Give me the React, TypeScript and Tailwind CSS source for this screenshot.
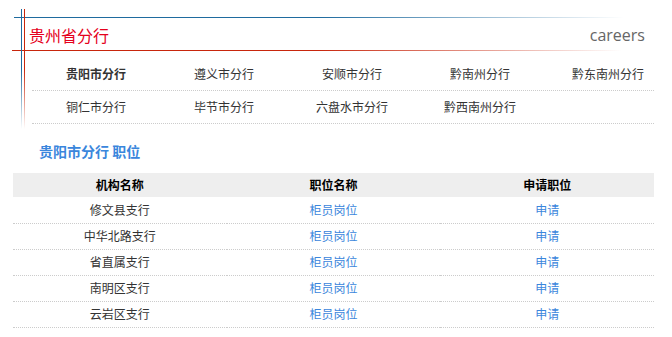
import React from 'react';

const branches = [
  ['贵阳市分行', '遵义市分行', '安顺市分行', '黔南州分行', '黔东南州分行'],
  ['铜仁市分行', '毕节市分行', '六盘水市分行', '黔西南州分行'],
];

const jobs = [
  { org: '修文县支行', title: '柜员岗位' },
  { org: '中华北路支行', title: '柜员岗位' },
  { org: '省直属支行', title: '柜员岗位' },
  { org: '南明区支行', title: '柜员岗位' },
  { org: '云岩区支行', title: '柜员岗位' },
];

export default function App() {
  return (
    <div className="relative w-[672px] h-[337px] overflow-hidden bg-white text-[#333] font-['Microsoft_YaHei','Noto_Sans_CJK_SC',sans-serif]">
      {/* decorative frame lines */}
      <div className="absolute left-[14px] top-[17px] h-px w-[610px] bg-gradient-to-r from-[#1f6b9f] via-[#1f6b9f] to-transparent" />
      <div className="absolute left-[12px] top-[50px] h-px w-[610px] bg-gradient-to-r from-[#c8260c] via-[#c8260c] to-transparent" />
      <div className="absolute left-[21px] top-[9px] w-px h-[120px] bg-gradient-to-b from-[#1f6b9f] via-[#1f6b9f] to-transparent" />
      <div className="absolute left-[24px] top-[9px] w-px h-[120px] bg-gradient-to-b from-[#c8260c] via-[#c8260c] to-transparent" />

      <div className="flex items-center justify-between h-[33px] mt-[18px] pl-[29px] pr-[27px]">
        <h1 className="text-[16px] leading-none text-[#e5001c]">贵州省分行</h1>
        <span className="text-[16px] leading-none text-[#666] font-['Open_Sans',sans-serif]">careers</span>
      </div>

      <div className="ml-[32px] mt-[7px]">
        {branches.map((row, i) => (
          <div key={i} className="flex w-[622px] h-[33px] border-b border-dotted border-[#ccc]">
            {row.map((b, j) => (
              <a
                key={b}
                className={`w-[128px] shrink-0 text-center text-[12px] leading-[32px] ${i === 0 && j === 0 ? 'font-bold text-[#333]' : 'text-[#333]'}`}
              >
                {b}
              </a>
            ))}
          </div>
        ))}
      </div>

      <h2 className="ml-[39px] mt-[17px] text-[14px] font-bold leading-[20px] text-[#3a86dc]">贵阳市分行 职位</h2>

      <table className="ml-[13px] mt-[12px] w-[641px] border-collapse text-[12px]">
        <thead>
          <tr className="bg-[#eeeeee] h-[24px]">
            <th className="w-1/3 font-bold text-black">机构名称</th>
            <th className="w-1/3 font-bold text-black">职位名称</th>
            <th className="w-1/3 font-bold text-black">申请职位</th>
          </tr>
        </thead>
        <tbody>
          {jobs.map((j) => (
            <tr key={j.org} className="h-[26px] border-b border-dotted border-[#ccc]">
              <td className="text-center text-[#333]">{j.org}</td>
              <td className="text-center text-[#3a86dc]">{j.title}</td>
              <td className="text-center text-[#3a86dc]">申请</td>
            </tr>
          ))}
        </tbody>
      </table>
    </div>
  );
}
